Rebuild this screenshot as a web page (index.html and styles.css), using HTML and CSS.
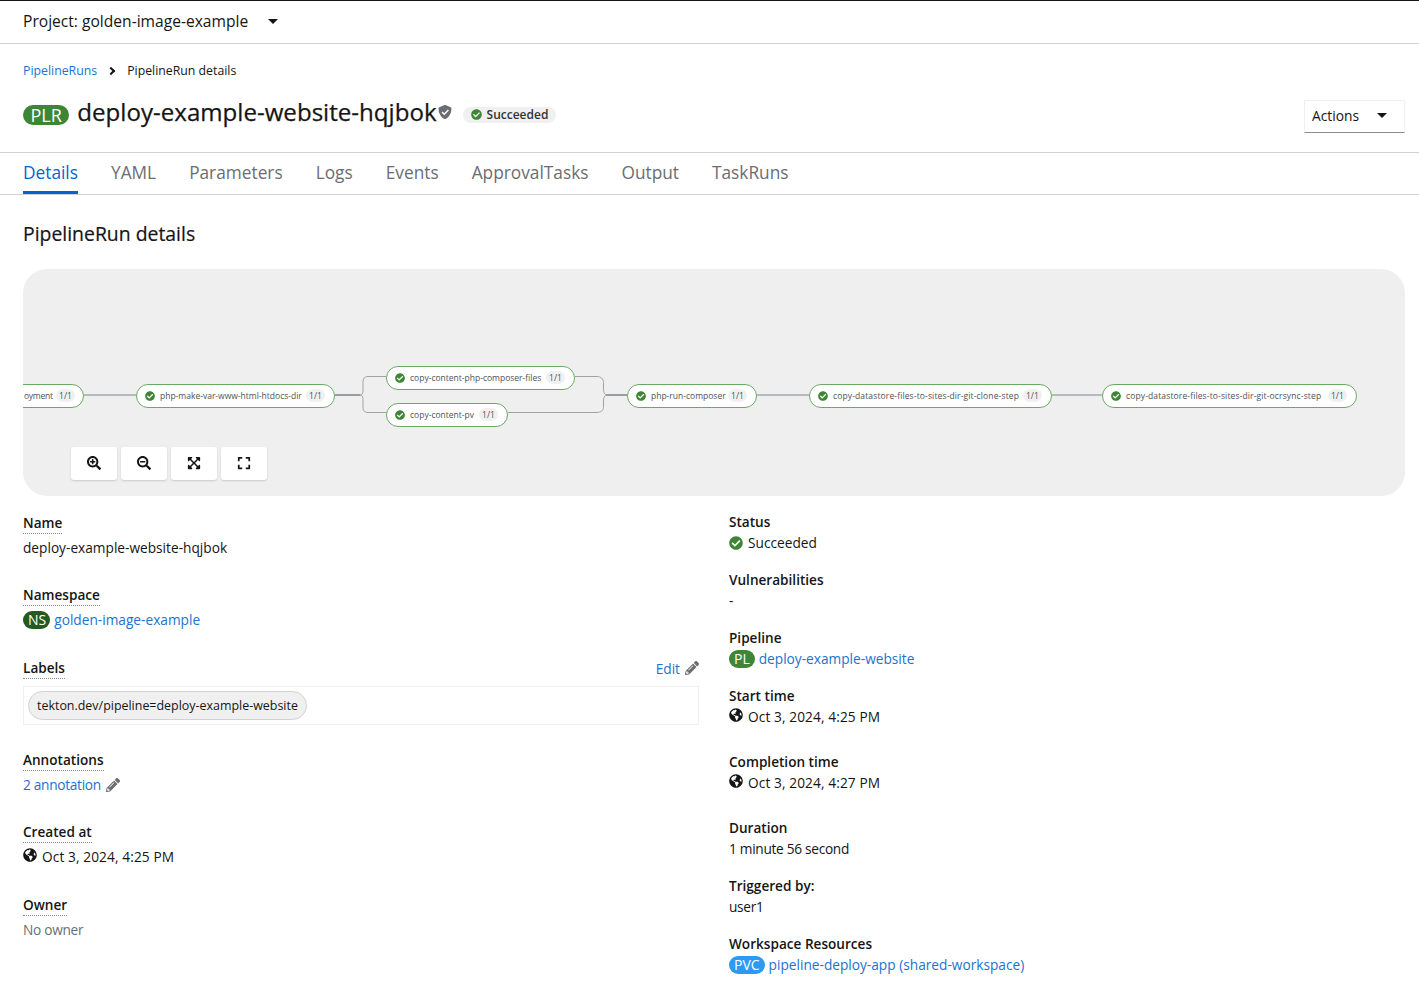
FILE: index.html
```html
<!DOCTYPE html>
<html lang="en">
<head>
<meta charset="utf-8">
<title>PipelineRun details</title>
<link rel="stylesheet" href="styles.css">
</head>
<body>
<svg class="sprite" xmlns="http://www.w3.org/2000/svg">
  <symbol id="i-check" viewBox="0 0 512 512"><path d="M504 256c0 136.967-111.033 248-248 248S8 392.967 8 256 119.033 8 256 8s248 111.033 248 248zM227.314 387.314l184-184c6.248-6.248 6.248-16.379 0-22.627l-22.627-22.627c-6.248-6.249-16.379-6.249-22.628 0L216 308.118l-70.059-70.059c-6.248-6.248-16.379-6.248-22.628 0l-22.627 22.627c-6.248 6.248-6.248 16.379 0 22.627l104 104c6.249 6.25 16.379 6.25 22.628.001z"/></symbol>
  <symbol id="i-globe" viewBox="0 0 496 512"><path d="M248 8C111.03 8 0 119.03 0 256s111.03 248 248 248 248-111.03 248-248S384.97 8 248 8zm82.29 357.6c-3.9 3.88-7.99 7.95-11.31 11.28-2.99 3-5.1 6.7-6.17 10.71-1.51 5.66-2.73 11.38-4.77 16.87l-17.39 46.85c-13.76 3-28 4.69-42.65 4.69v-27.38c1.69-12.62-7.64-36.26-22.63-51.25-6-6-9.37-14.14-9.37-22.63v-32.01c0-11.64-6.27-22.34-16.46-27.97-14.37-7.95-34.81-19.06-48.81-26.11-11.48-5.78-22.1-13.14-31.65-21.75l-.8-.72a114.792 114.792 0 0 1-18.06-20.74c-9.38-13.77-24.66-36.42-34.59-51.14 20.47-45.5 57.36-82.04 103.2-101.89l24.01 12.01C203.48 89.74 216 82.01 216 70.11v-11.3c7.99-1.29 16.12-2.11 24.39-2.42l28.3 28.3c6.25 6.25 6.25 16.38 0 22.63L264 112l-10.34 10.34c-3.12 3.12-3.12 8.19 0 11.31l4.69 4.69c3.12 3.12 3.12 8.19 0 11.31l-8 8a8.008 8.008 0 0 1-5.66 2.34h-8.99c-2.08 0-4.08.81-5.58 2.27l-9.92 9.65a8.008 8.008 0 0 0-1.58 9.31l15.59 31.19c2.66 5.32-1.21 11.58-7.15 11.58h-5.64c-1.93 0-3.79-.7-5.24-1.96l-9.28-8.06a16.017 16.017 0 0 0-15.55-3.1l-31.17 10.39a11.95 11.95 0 0 0-8.17 11.34c0 4.53 2.56 8.66 6.61 10.69l11.08 5.54c9.41 4.71 19.79 7.16 30.31 7.16s22.59 27.29 32 32h66.75c8.49 0 16.62 3.37 22.63 9.37l13.69 13.69a30.503 30.503 0 0 1 8.93 21.57 46.536 46.536 0 0 1-13.72 32.98zM417 274.25c-5.79-1.45-10.84-5-14.15-9.97l-17.98-26.97a23.97 23.97 0 0 1 0-26.62l19.59-29.38c2.32-3.47 5.5-6.29 9.24-8.15l12.98-6.49C440.2 193.59 448 223.87 448 256c0 8.67-.74 17.16-1.82 25.54L417 274.25z"/></symbol>
  <symbol id="i-pencil" viewBox="0 0 512 512"><path d="M497.9 142.1l-46.1 46.1c-4.7 4.7-12.3 4.7-17 0l-111-111c-4.7-4.7-4.7-12.3 0-17l46.1-46.1c18.7-18.7 49.1-18.7 67.9 0l60.1 60.1c18.8 18.7 18.8 49.1 0 67.9zM284.2 99.8L21.6 362.4.4 483.9c-2.9 16.4 11.4 30.6 27.8 27.8l121.5-21.3 262.6-262.6c4.7-4.7 4.7-12.3 0-17l-111-111c-4.8-4.7-12.4-4.7-17.1 0zM124.1 339.9c-5.5-5.5-5.5-14.3 0-19.8l154-154c5.5-5.5 14.3-5.5 19.8 0s5.5 14.3 0 19.8l-154 154c-5.5 5.5-14.3 5.5-19.8 0zM88 424h48v36.3l-64.5 11.3-31.1-31.1L51.7 376H88v48z"/></symbol>
  <symbol id="i-zoomin" viewBox="0 0 512 512"><path d="M304 192v32c0 6.6-5.4 12-12 12h-56v56c0 6.6-5.4 12-12 12h-32c-6.6 0-12-5.4-12-12v-56h-56c-6.6 0-12-5.4-12-12v-32c0-6.6 5.4-12 12-12h56v-56c0-6.6 5.4-12 12-12h32c6.6 0 12 5.4 12 12v56h56c6.6 0 12 5.4 12 12zm201 284.7L476.7 505c-9.4 9.4-24.6 9.4-33.9 0L343 405.3c-4.5-4.5-7-10.6-7-17V372c-35.3 27.6-79.7 44-128 44C93.1 416 0 322.9 0 208S93.1 0 208 0s208 93.1 208 208c0 48.3-16.4 92.7-44 128h16.3c6.4 0 12.5 2.5 17 7l99.7 99.7c9.3 9.4 9.3 24.6 0 34zM344 208c0-75.2-60.8-136-136-136S72 132.8 72 208s60.8 136 136 136 136-60.8 136-136z"/></symbol>
  <symbol id="i-zoomout" viewBox="0 0 512 512"><path d="M304 192v32c0 6.6-5.4 12-12 12H124c-6.6 0-12-5.4-12-12v-32c0-6.6 5.4-12 12-12h168c6.6 0 12 5.4 12 12zm201 284.7L476.7 505c-9.4 9.4-24.6 9.4-33.9 0L343 405.3c-4.5-4.5-7-10.6-7-17V372c-35.3 27.6-79.7 44-128 44C93.1 416 0 322.9 0 208S93.1 0 208 0s208 93.1 208 208c0 48.3-16.4 92.7-44 128h16.3c6.4 0 12.5 2.5 17 7l99.7 99.7c9.3 9.4 9.3 24.6 0 34zM344 208c0-75.2-60.8-136-136-136S72 132.8 72 208s60.8 136 136 136 136-60.8 136-136z"/></symbol>
  <symbol id="i-fit" viewBox="0 0 448 512"><path d="M448 344v112a23.94 23.94 0 0 1-24 24H312c-21.39 0-32.09-25.9-17-41l36.2-36.2L224 295.6 116.77 402.9 153 439c15.09 15.1 4.39 41-17 41H24a23.94 23.94 0 0 1-24-24V344c0-21.4 25.89-32.1 41-17l36.19 36.2L184.46 256 77.18 148.7 41 185c-15.1 15.1-41 4.4-41-17V56a23.94 23.94 0 0 1 24-24h112c21.39 0 32.09 25.9 17 41l-36.2 36.2L224 216.4l107.23-107.3L295 73c-15.09-15.1-4.39-41 17-41h112a23.94 23.94 0 0 1 24 24v112c0 21.4-25.89 32.1-41 17l-36.19-36.2L263.54 256l107.28 107.3L407 327.1c15.1-15.2 41-4.5 41 16.9z"/></symbol>
  <symbol id="i-expand" viewBox="0 0 448 512"><path d="M0 180V56c0-13.3 10.7-24 24-24h124c6.6 0 12 5.4 12 12v40c0 6.6-5.4 12-12 12H64v84c0 6.6-5.4 12-12 12H12c-6.6 0-12-5.4-12-12zM288 44v40c0 6.6 5.4 12 12 12h84v84c0 6.6 5.4 12 12 12h40c6.6 0 12-5.4 12-12V56c0-13.3-10.7-24-24-24H300c-6.6 0-12 5.4-12 12zm148 276h-40c-6.6 0-12 5.4-12 12v84h-84c-6.6 0-12 5.4-12 12v40c0 6.6 5.4 12 12 12h124c13.3 0 24-10.7 24-24V332c0-6.6-5.4-12-12-12zM160 468v-40c0-6.6-5.4-12-12-12H64v-84c0-6.6-5.4-12-12-12H12c-6.6 0-12 5.4-12 12v124c0 13.3 10.7 24 24 24h124c6.6 0 12-5.4 12-12z"/></symbol>
  <symbol id="i-shield" viewBox="0 0 512 512"><path fill-rule="evenodd" d="M256 0c6 0 12 1.300 17.500 3.700l190 80c17 7.200 28.500 24 28.500 42.300C492 280 420 440 272 509c-10 4-22 4-32 0C92 440 20 280 20 126c0-18.300 11.500-35.100 28.500-42.300l190-80C244 1.300 250 0 256 0zM227 376l172-172-36-36-136 136-62-62-36 36z"/></symbol>
</svg>

<header class="project-bar">
  <span class="project-name">Project: golden-image-example</span>
  <span class="caret project-caret"></span>
</header>

<nav class="breadcrumb">
  <a class="link crumb">PipelineRuns</a>
  <span class="crumb-sep"></span>
  <span class="crumb">PipelineRun details</span>
</nav>

<section class="title-row">
  <div class="title-main">
    <span class="badge badge-plr">PLR</span>
    <h1 class="title">deploy-example-website-hqjbok</h1>
    <svg class="shield"><use href="#i-shield"/></svg>
    <span class="status-pill"><svg class="pill-check"><use href="#i-check"/></svg>Succeeded</span>
  </div>
  <button class="actions">Actions<span class="caret"></span></button>
</section>

<nav class="tabs">
  <a class="tab tab-active">Details</a>
  <a class="tab">YAML</a>
  <a class="tab">Parameters</a>
  <a class="tab">Logs</a>
  <a class="tab">Events</a>
  <a class="tab">ApprovalTasks</a>
  <a class="tab">Output</a>
  <a class="tab">TaskRuns</a>
</nav>

<main class="content">
  <h2 class="section-title">PipelineRun details</h2>

  <div class="graph">
    <svg class="edges" width="1382" height="227" viewBox="0 0 1382 227">
      <path class="edge" d="M61 126H113"/>
      <path class="edge edge-dark" d="M312 126H337"/>
      <path class="edge edge-thin" d="M337 126C340 126 340 123 340 120V113.500C340 110 341 107.500 345 107.500H363"/>
      <path class="edge edge-thin" d="M337 126C340 126 340 129 340 132V138.500C340 141 341 143.500 345 143.500H363"/>
      <path class="edge edge-thin" d="M552 107.500H574C578 107.500 580.500 110 580.500 113.500V120C580.500 123 581 126 585 126"/>
      <path class="edge edge-thin" d="M485 143.500H574C578 143.500 580.500 141 580.500 138.500V132C580.500 129 581 126 585 126"/>
      <path class="edge edge-dark" d="M583 126H604"/>
      <path class="edge" d="M734 126H786"/>
      <path class="edge" d="M1029 126H1079"/>
    </svg>

    <div class="node node-cut">
      <span class="node-label">oyment</span><span class="node-count">1/1</span>
    </div>
    <div class="node node-a">
      <svg class="node-check"><use href="#i-check"/></svg><span class="node-label">php-make-var-www-html-htdocs-dir</span><span class="node-count">1/1</span>
    </div>
    <div class="node node-b">
      <svg class="node-check"><use href="#i-check"/></svg><span class="node-label">copy-content-php-composer-files</span><span class="node-count">1/1</span>
    </div>
    <div class="node node-c">
      <svg class="node-check"><use href="#i-check"/></svg><span class="node-label">copy-content-pv</span><span class="node-count">1/1</span>
    </div>
    <div class="node node-d">
      <svg class="node-check"><use href="#i-check"/></svg><span class="node-label">php-run-composer</span><span class="node-count">1/1</span>
    </div>
    <div class="node node-e">
      <svg class="node-check"><use href="#i-check"/></svg><span class="node-label">copy-datastore-files-to-sites-dir-git-clone-step</span><span class="node-count">1/1</span>
    </div>
    <div class="node node-f">
      <svg class="node-check"><use href="#i-check"/></svg><span class="node-label">copy-datastore-files-to-sites-dir-git-ocrsync-step</span><span class="node-count">1/1</span>
    </div>

    <div class="graph-tools">
      <button class="tool"><svg class="tool-icon"><use href="#i-zoomin"/></svg></button>
      <button class="tool"><svg class="tool-icon"><use href="#i-zoomout"/></svg></button>
      <button class="tool"><svg class="tool-icon"><use href="#i-fit"/></svg></button>
      <button class="tool"><svg class="tool-icon"><use href="#i-expand"/></svg></button>
    </div>
  </div>

  <div class="details">
    <dl class="col col-left">
      <div class="item item-short">
        <dt class="term term-hint">Name</dt>
        <dd class="val">deploy-example-website-hqjbok</dd>
      </div>
      <div class="item">
        <dt class="term term-hint">Namespace</dt>
        <dd class="val"><span class="badge badge-ns">NS</span><a class="link">golden-image-example</a></dd>
      </div>
      <div class="item item-labels">
        <dt class="term-row"><span class="term term-hint">Labels</span><a class="link edit">Edit<svg class="pencil"><use href="#i-pencil"/></svg></a></dt>
        <dd class="label-box"><span class="chip">tekton.dev/pipeline=deploy-example-website</span></dd>
      </div>
      <div class="item item-short">
        <dt class="term term-hint">Annotations</dt>
        <dd class="val val-tight"><a class="link edit">2 annotation<svg class="pencil"><use href="#i-pencil"/></svg></a></dd>
      </div>
      <div class="item">
        <dt class="term term-hint">Created at</dt>
        <dd class="val val-date"><svg class="globe"><use href="#i-globe"/></svg>Oct 3, 2024, 4:25 PM</dd>
      </div>
      <div class="item">
        <dt class="term term-hint">Owner</dt>
        <dd class="val val-muted">No owner</dd>
      </div>
    </dl>

    <dl class="col col-right">
      <div class="ritem">
        <dt class="term">Status</dt>
        <dd class="val"><svg class="status-check"><use href="#i-check"/></svg>Succeeded</dd>
      </div>
      <div class="ritem">
        <dt class="term">Vulnerabilities</dt>
        <dd class="val">-</dd>
      </div>
      <div class="ritem">
        <dt class="term">Pipeline</dt>
        <dd class="val"><span class="badge badge-pl">PL</span><a class="link">deploy-example-website</a></dd>
      </div>
      <div class="ritem ritem-time">
        <dt class="term">Start time</dt>
        <dd class="val val-date"><svg class="globe"><use href="#i-globe"/></svg>Oct 3, 2024, 4:25 PM</dd>
      </div>
      <div class="ritem ritem-time">
        <dt class="term">Completion time</dt>
        <dd class="val val-date"><svg class="globe"><use href="#i-globe"/></svg>Oct 3, 2024, 4:27 PM</dd>
      </div>
      <div class="ritem">
        <dt class="term">Duration</dt>
        <dd class="val val-tight">1 minute 56 second</dd>
      </div>
      <div class="ritem">
        <dt class="term">Triggered by:</dt>
        <dd class="val val-tight">user1</dd>
      </div>
      <div class="ritem">
        <dt class="term">Workspace Resources</dt>
        <dd class="val"><span class="badge badge-pvc">PVC</span><a class="link">pipeline-deploy-app (shared-workspace)</a></dd>
      </div>
    </dl>
  </div>
</main>
</body>
</html>
```

FILE: styles.css
```css
* { box-sizing: border-box; }
html, body { margin: 0; padding: 0; }
body {
  height: 988px;
  overflow: hidden;
  background: #fff;
  color: #151515;
  font-family: "Open Sans", "Noto Sans", sans-serif;
  font-size: 13.7px;
  line-height: 21px;
  border-top: 1px solid #151515;
}
dl, dd, dt, h1, h2 { margin: 0; padding: 0; font-weight: inherit; font-size: inherit; }
button { font: inherit; color: inherit; cursor: pointer; }
.sprite { display: none; }
svg { fill: currentColor; flex: none; }
.link { color: #1a73d0; text-decoration: none; }

.caret {
  display: inline-block;
  width: 0; height: 0;
  border-left: 5px solid transparent;
  border-right: 5px solid transparent;
  border-top: 5px solid #151515;
}

.project-bar {
  height: 43px;
  border-bottom: 1px solid #d2d2d2;
  padding: 0 0 2px 23px;
  display: flex;
  align-items: center;
  font-size: 15.6px;
}
.project-name { width: 245px; }

.breadcrumb {
  display: flex;
  align-items: center;
  padding: 16px 0 0 23px;
  height: 37px;
  font-size: 12.3px;
}
.crumb-sep {
  width: 6px; height: 6px;
  margin: 0 13px 0 11px;
  border-top: 2px solid #151515;
  border-right: 2px solid #151515;
  transform: rotate(45deg);
}

.title-row {
  height: 71px;
  display: flex;
  justify-content: space-between;
  padding: 0 14px 0 23px;
}
.title-main { display: flex; align-items: center; height: 60px; padding-top: 7px; }
.title {
  font-size: 24.1px;
  line-height: 32px;
  margin: 0 0 6px 8px;
  -webkit-text-stroke: .25px #151515;
}
.shield { width: 14px; height: 14px; color: #6a6e73; margin: 0 0 6px 1px; }
.status-pill {
  display: inline-flex;
  align-items: center;
  height: 16px;
  margin-left: 11px;
  padding: 0 8px;
  background: #f0f0f0;
  border-radius: 30px;
  font-size: 12px;
  font-weight: 600;
  color: #333;
}
.pill-check { width: 11px; height: 11px; color: #3e8635; margin-right: 5px; }

.actions {
  align-self: flex-start;
  margin-top: 19px;
  width: 101px;
  height: 33px;
  padding: 0 17px 2px 7px;
  display: flex;
  align-items: center;
  justify-content: space-between;
  background: #fff;
  border: 1px solid #f0f0f0;
  border-bottom: 1px solid #8a8d90;
  font-size: 13.8px;
}

.tabs {
  display: flex;
  gap: 33px;
  height: 43px;
  padding: 0 0 0 23px;
  border-top: 1px solid #d2d2d2;
  border-bottom: 1px solid #d2d2d2;
  font-size: 17.3px;
  color: #6a6e73;
}
.tab { line-height: 39px; height: 41px; }
.tab-active { color: #06c; border-bottom: 3px solid #06c; }

.content { padding: 0 14px 0 23px; }
.section-title {
  font-size: 19.4px;
  line-height: 28px;
  padding-top: 25px;
  height: 74px;
  -webkit-text-stroke: .2px #151515;
}

.graph {
  position: relative;
  height: 227px;
  background: #efefef;
  border-radius: 24px;
  overflow: hidden;
}
.edges { position: absolute; left: 0; top: 0; fill: none; }
.edge { stroke: #b8bbbe; stroke-width: 2; fill: none; }
.edge-dark { stroke: #9a9da0; }
.edge-thin { stroke: #9fa2a5; stroke-width: 1; }

.node {
  position: absolute;
  height: 23.500px;
  display: flex;
  align-items: center;
  padding: 0 9px 0 8px;
  background: #fff;
  border: 1px solid #6ca765;
  border-radius: 12px;
  font-size: 8.500px;
  color: #4f5255;
}
.node-check { width: 10px; height: 10px; color: #3e8635; margin-right: 5px; }
.node-label { flex: 1; white-space: nowrap; }
.node-count {
  height: 13px;
  line-height: 13px;
  width: 19px;
  text-align: center;
  background: #f0f0f0;
  border-radius: 8px;
}
.node-cut { left: -30px; top: 115px; width: 91px; padding-left: 30px; padding-right: 8px; }
.node-cut .node-label { letter-spacing: -.25px; }
.node-a { left: 113px; top: 115px; width: 199px; }
.node-b { left: 363px; top: 97px; width: 189px; }
.node-c { left: 363px; top: 134px; width: 122px; }
.node-d { left: 604px; top: 115px; width: 130px; }
.node-e { left: 786px; top: 115px; width: 243px; letter-spacing: .13px; }
.node-f { left: 1079px; top: 115px; width: 255px; letter-spacing: .13px; }

.graph-tools {
  position: absolute;
  left: 48px;
  top: 178px;
  display: flex;
  gap: 4px;
}
.tool {
  width: 46px;
  height: 33px;
  padding: 0 0 2px;
  display: flex;
  align-items: center;
  justify-content: center;
  background: #fff;
  border: 0;
  border-radius: 3px;
  box-shadow: 0 1px 2px rgba(3,3,3,.16);
}
.tool-icon { width: 14px; height: 14px; color: #151515; }

.details {
  display: grid;
  grid-template-columns: 676px 676px;
  gap: 30px;
  padding-top: 16px;
}
.term { font-weight: 600; line-height: 21px; font-size: 13.6px; }
.term-hint { display: inline-block; border-bottom: 1px dotted #8a8d90; }
.val { line-height: 21px; display: flex; align-items: center; }
.val-muted { color: #6a6e73; letter-spacing: -.3px; }
.val-date { letter-spacing: .1px; }
.val-tight { letter-spacing: -.3px; }

.item { height: 73px; }
.item-short { height: 72px; }
.item .val { margin-top: 3px; }
.item-labels { height: 92px; }
.term-row { display: flex; justify-content: space-between; }
.edit { display: inline-flex; align-items: center; }
.pencil { width: 14px; height: 14px; color: #6a6e73; margin-left: 5px; }
.label-box {
  margin-top: 7px;
  height: 39px;
  border: 1px solid #f0f0f0;
  display: flex;
  align-items: center;
  padding-left: 4px;
}
.chip {
  height: 29px;
  line-height: 27px;
  padding: 0 8px;
  background: #f0f0f0;
  border: 1px solid #d2d2d2;
  border-radius: 15px;
  font-size: 12.450px;
}

.col-right { margin-top: -1px; }
.ritem { height: 58px; }
.ritem-time { height: 66px; }

.badge {
  display: inline-block;
  height: 18px;
  line-height: 18px;
  padding: 0 5px;
  border-radius: 20px;
  color: #fff;
  font-size: 14px;
  margin-right: 4px;
}
.badge-plr { background: #3e8635; font-size: 18px; height: 20px; line-height: 20px; padding: 0 7.500px; margin-right: 0; }
.badge-ns { background: #245a1f; padding: 0 4px 0 5px; }
.badge-pl { background: #3e8635; }
.badge-pvc { background: #2b9af3; }

.globe { width: 14px; height: 14px; margin: -4px 5px 0 0; }
.status-check { width: 14px; height: 14px; color: #3e8635; margin-right: 5px; }
```
